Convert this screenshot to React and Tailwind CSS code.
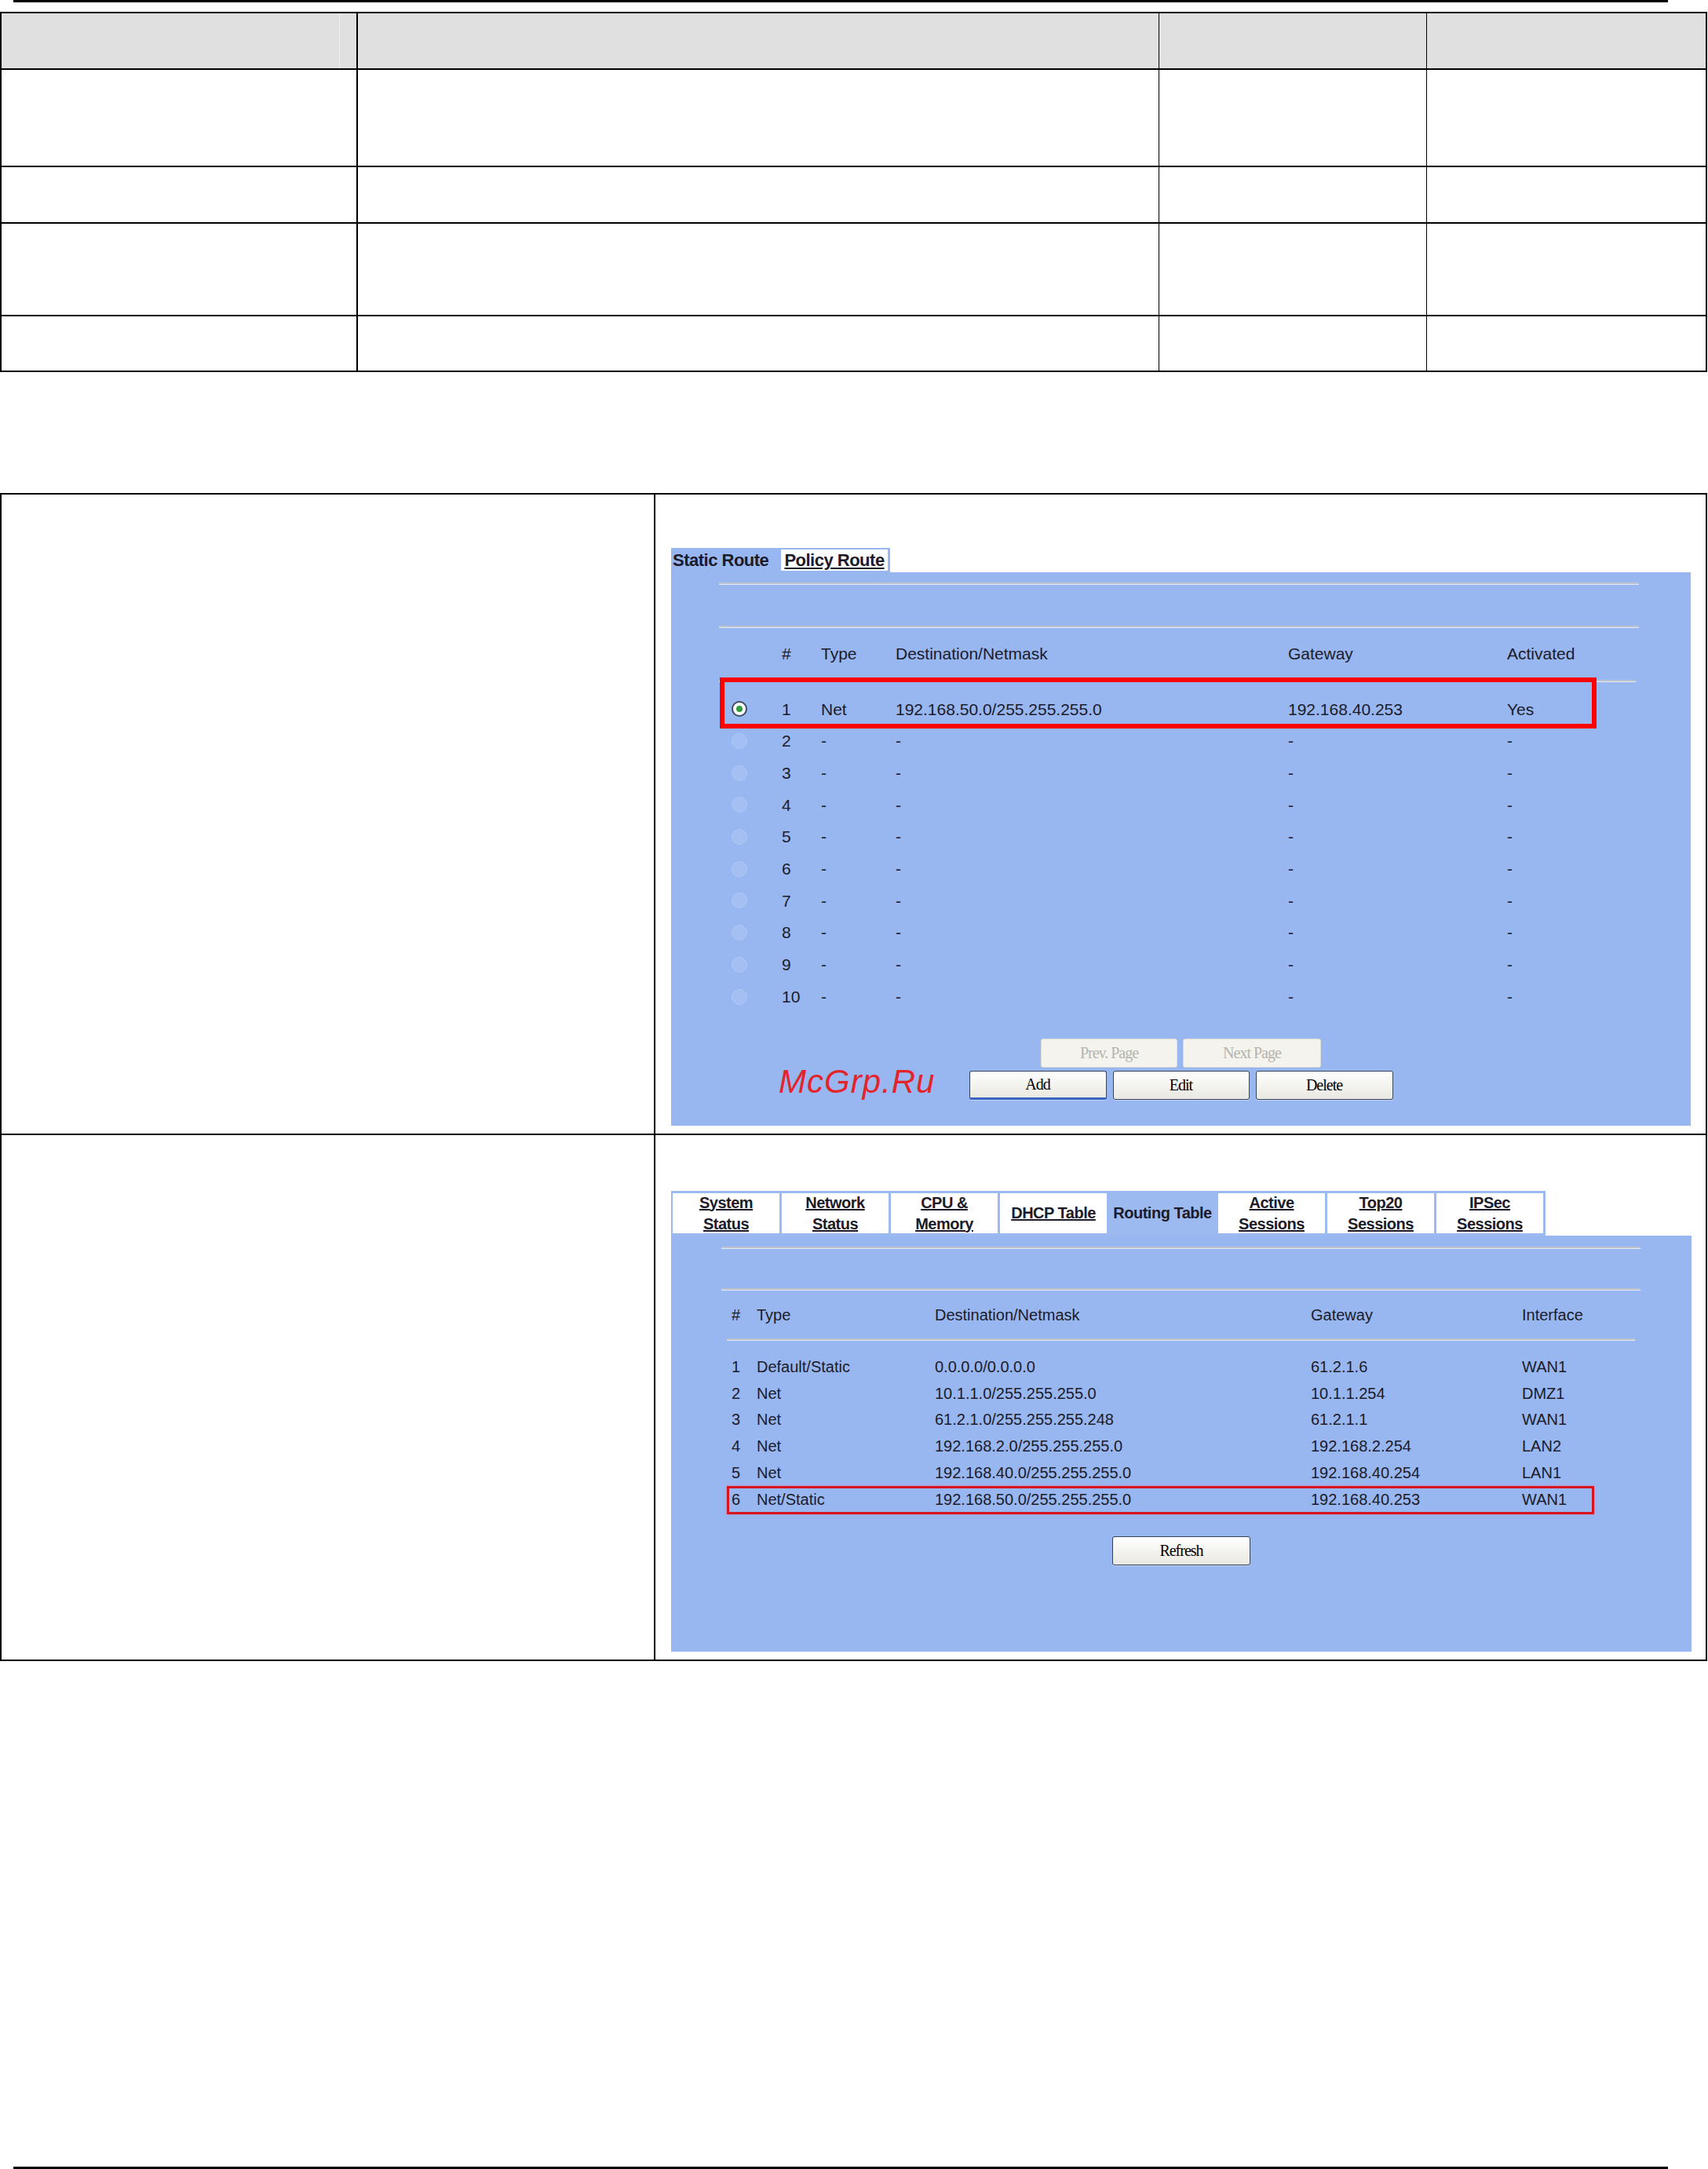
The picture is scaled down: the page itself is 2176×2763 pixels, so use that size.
import React from 'react';

const PANEL_FONT = { fontFamily: '"Liberation Sans", Arial, sans-serif' };

const STATIC_ROWS = [
  { n: 1, type: 'Net', dest: '192.168.50.0/255.255.255.0', gw: '192.168.40.253', act: 'Yes', checked: true },
  ...[2, 3, 4, 5, 6, 7, 8, 9, 10].map(n => ({ n, type: '-', dest: '-', gw: '-', act: '-' }))
];

const ROUTES = [
  { n: 1, type: 'Default/Static', dest: '0.0.0.0/0.0.0.0', gw: '61.2.1.6', iface: 'WAN1' },
  { n: 2, type: 'Net', dest: '10.1.1.0/255.255.255.0', gw: '10.1.1.254', iface: 'DMZ1' },
  { n: 3, type: 'Net', dest: '61.2.1.0/255.255.255.248', gw: '61.2.1.1', iface: 'WAN1' },
  { n: 4, type: 'Net', dest: '192.168.2.0/255.255.255.0', gw: '192.168.2.254', iface: 'LAN2' },
  { n: 5, type: 'Net', dest: '192.168.40.0/255.255.255.0', gw: '192.168.40.254', iface: 'LAN1' },
  { n: 6, type: 'Net/Static', dest: '192.168.50.0/255.255.255.0', gw: '192.168.40.253', iface: 'WAN1' }
];

const STATUS_TABS = [
  ['System', 'Status'],
  ['Network', 'Status'],
  ['CPU &', 'Memory'],
  ['DHCP Table'],
  ['Routing Table'],
  ['Active', 'Sessions'],
  ['Top20', 'Sessions'],
  ['IPSec', 'Sessions']
];

function Rule({ className }) {
  return <div className={`h-[3px] bg-[#bcc3ce] border-b border-[#e4eaf6] ${className}`}></div>;
}

function Radio({ checked }) {
  if (checked) {
    return (
      <div className="w-[20px] h-[20px] rounded-full bg-white border-2 border-[#3c4a5c] flex items-center justify-center">
        <div className="w-[8px] h-[8px] rounded-full bg-[#2f9e3a]"></div>
      </div>
    );
  }
  return <div className="w-[20px] h-[20px] rounded-full bg-[#a3bff3] border border-[#b0c8f3]"></div>;
}

function Btn({ children, w, disabled, focused }) {
  if (disabled) {
    return (
      <div
        className={`${w} h-[37px] rounded-[3px] border border-[#dcdcd4] bg-[#f4f3ed] flex items-center justify-center text-[20px] tracking-[-1px] text-[#b5b5b0]`}
        style={{ fontFamily: '"Liberation Serif", "Times New Roman", serif' }}
      >
        {children}
      </div>
    );
  }
  return (
    <div
      className={`${w} h-[37px] rounded-[3px] border border-[#34445a] ${focused ? 'border-b-[3px] border-b-[#3a64c4]' : ''} bg-gradient-to-b from-white to-[#e9e8e1] shadow-[0_1px_0_#c6d6f4] flex items-center justify-center text-[20px] tracking-[-1px] text-black`}
      style={{ fontFamily: '"Liberation Serif", "Times New Roman", serif' }}
    >
      {children}
    </div>
  );
}

function StaticRouteShot() {
  return (
    <div className="text-[#1b1b2a]" style={PANEL_FONT}>
      {/* tab strip */}
      <div className="flex w-fit h-[31px] bg-[#98b6f0] pr-[3px]">
        <div className="w-[140px] flex items-center pl-[2px] text-[22px] font-bold tracking-[-0.5px]">Static Route</div>
        <div className="w-[136px] my-[2px] bg-white flex items-center justify-center text-[22px] font-bold underline tracking-[-0.5px]">
          Policy Route
        </div>
      </div>

      {/* panel body */}
      <div className="relative w-[1299px] h-[705px] bg-[#98b6f0] pt-[13px]">
        <Rule className="ml-[61px] w-[1172px]" />
        <Rule className="ml-[61px] w-[1172px] mt-[52px]" />
        <div className="h-[66px] flex items-center pl-[77px] text-[21px]">
          <div className="w-[64px]"></div>
          <div className="w-[50px]">#</div>
          <div className="w-[95px]">Type</div>
          <div className="w-[500px]">Destination/Netmask</div>
          <div className="w-[279px]">Gateway</div>
          <div>Activated</div>
        </div>
        <Rule className="ml-[61px] w-[1168px]" />

        <div className="mt-[14px]">
          {STATIC_ROWS.map(r => (
            <div key={r.n} className="h-[40.7px] flex items-center pl-[77px] text-[21px]">
              <div className="w-[64px]">
                <Radio checked={r.checked} />
              </div>
              <div className="w-[50px]">{r.n}</div>
              <div className="w-[95px]">{r.type}</div>
              <div className="w-[500px]">{r.dest}</div>
              <div className="w-[279px]">{r.gw}</div>
              <div>{r.act}</div>
            </div>
          ))}
        </div>

        <div className="mt-[33px] flex justify-center gap-[7px]">
          <Btn w="w-[174px]" disabled>Prev. Page</Btn>
          <Btn w="w-[176px]" disabled>Next Page</Btn>
        </div>
        <div className="mt-[4px] flex justify-center gap-[8px]">
          <Btn w="w-[175px]" focused>Add</Btn>
          <Btn w="w-[174px]">Edit</Btn>
          <Btn w="w-[175px]">Delete</Btn>
        </div>

        {/* highlight box */}
        <div className="absolute left-[62px] top-[134px] w-[1117px] h-[65px] border-[6px] border-[#ff0000]"></div>

        {/* watermark */}
        <div className="absolute left-[137px] top-[628px] text-[42px] italic text-[#e3252b] leading-none tracking-[1px]">
          McGrp.Ru
        </div>
      </div>
    </div>
  );
}

function RoutingTableShot() {
  return (
    <div className="text-[#1b1b2a]" style={PANEL_FONT}>
      {/* tab strip */}
      <div className="flex w-fit bg-[#9cb9f0] pt-[3px] pb-[3px] pl-[2px] pr-[3px] gap-[3px]">
        {STATUS_TABS.map(t => {
          const active = t[0] === 'Routing Table';
          return (
            <div
              key={t.join(' ')}
              className={`w-[136px] h-[51px] flex flex-col items-center justify-center text-center text-[20px] font-bold leading-[27px] tracking-[-0.5px] ${active ? '' : 'bg-white underline'}`}
            >
              {t.map(line => (
                <span key={line}>{line}</span>
              ))}
            </div>
          );
        })}
      </div>

      {/* panel body */}
      <div className="relative w-[1300px] h-[530px] bg-[#98b6f0] pt-[14px]">
        <Rule className="ml-[64px] w-[1171px]" />
        <Rule className="ml-[64px] w-[1171px] mt-[50px]" />
        <div className="h-[61px] flex items-center pl-[77px] text-[20px]">
          <div className="w-[32px]">#</div>
          <div className="w-[227px]">Type</div>
          <div className="w-[479px]">Destination/Netmask</div>
          <div className="w-[269px]">Gateway</div>
          <div>Interface</div>
        </div>
        <Rule className="ml-[71px] w-[1157px]" />

        <div className="mt-[16px]">
          {ROUTES.map(r => (
            <div key={r.n} className="h-[33.8px] flex items-center pl-[77px] text-[20px]">
              <div className="w-[32px]">{r.n}</div>
              <div className="w-[227px]">{r.type}</div>
              <div className="w-[479px]">{r.dest}</div>
              <div className="w-[269px]">{r.gw}</div>
              <div>{r.iface}</div>
            </div>
          ))}
        </div>

        <div className="mt-[30px] flex justify-center">
          <Btn w="w-[176px]">Refresh</Btn>
        </div>

        <div className="absolute left-[71px] top-[319px] w-[1105px] h-[36px] border-[3px] border-[#d81420] shadow-[0_0_2px_#f06070]"></div>
      </div>
    </div>
  );
}

export default function App() {
  const headCell = 'bg-[#e0e0e0]';
  return (
    <div className="w-[2176px] h-[2763px] bg-white flex flex-col">
      {/* top rule */}
      <div className="ml-[17px] w-[2108px] h-[3px] bg-black"></div>

      {/* parameter table */}
      <div className="mt-[12px] w-[2175px] border-2 border-black">
        <div className="flex h-[72px] border-b-2 border-black">
          <div className={`w-[454px] border-r-2 border-black ${headCell}`}>
            <div className="w-[431px] h-full border-r border-[#efefef]"></div>
          </div>
          <div className={`w-[1021px] border-r border-black ${headCell}`}></div>
          <div className={`w-[341px] border-r border-black ${headCell}`}></div>
          <div className={`flex-1 ${headCell}`}></div>
        </div>
        {[122, 70, 116, 69].map((h, i, arr) => (
          <div
            key={i}
            className={`flex ${i < arr.length - 1 ? 'border-b-2 border-black' : ''}`}
            style={{ height: h + (i < arr.length - 1 ? 2 : 0) }}
          >
            <div className="w-[454px] border-r-2 border-black"></div>
            <div className="w-[1021px] border-r border-black"></div>
            <div className="w-[341px] border-r border-black"></div>
            <div className="flex-1"></div>
          </div>
        ))}
      </div>

      {/* screenshot table */}
      <div className="mt-[154px] w-[2175px] border-2 border-black">
        <div className="flex border-b-2 border-black">
          <div className="w-[833px] border-r-2 border-black"></div>
          <div className="flex-1 pt-[68px] pb-[10px] pl-[20px]">
            <StaticRouteShot />
          </div>
        </div>
        <div className="flex">
          <div className="w-[833px] border-r-2 border-black"></div>
          <div className="flex-1 pt-[71px] pb-[10px] pl-[20px]">
            <RoutingTableShot />
          </div>
        </div>
      </div>

      {/* bottom rule */}
      <div className="mt-auto ml-[17px] w-[2108px] h-[3px] bg-black"></div>
    </div>
  );
}
